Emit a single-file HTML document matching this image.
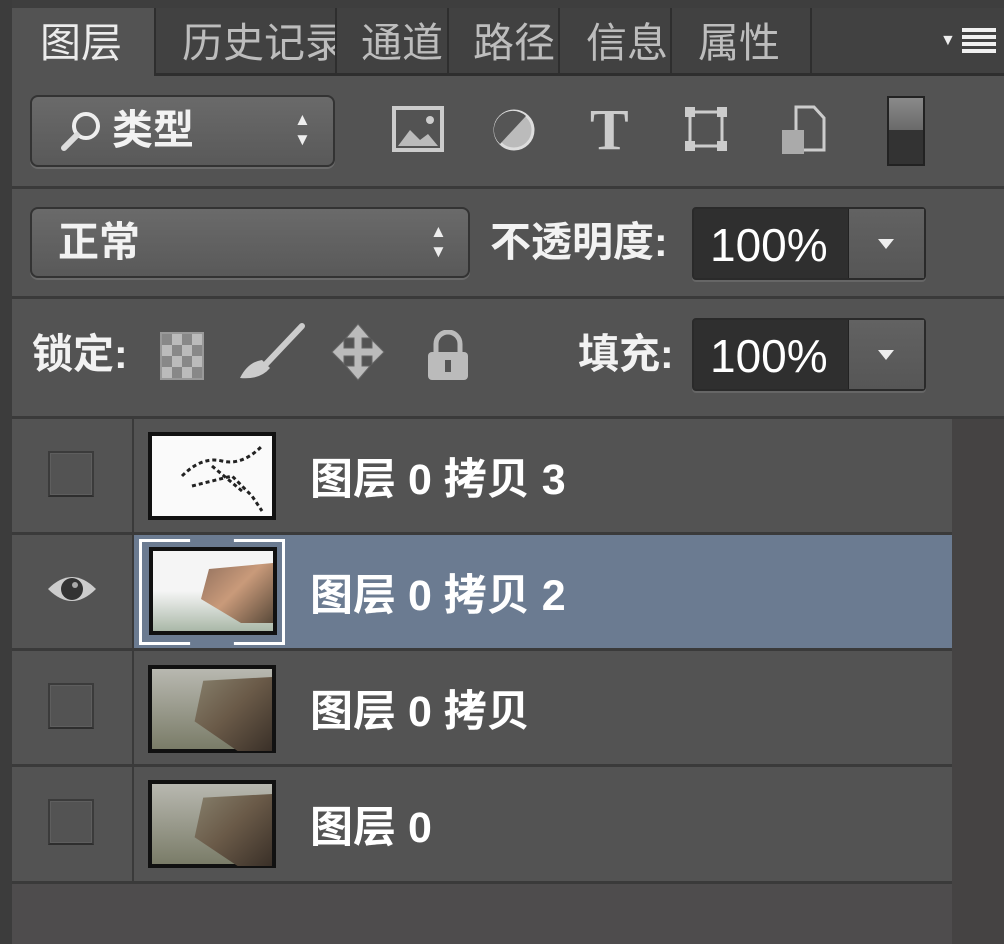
<!DOCTYPE html>
<html><head><meta charset="utf-8"><style>
*{margin:0;padding:0;box-sizing:border-box}
body{width:1004px;height:944px;background:#3c3c3c;position:relative;overflow:hidden;font-family:"Liberation Sans","Noto Sans CJK SC",sans-serif;color:#eee}
.a{position:absolute}
.tab{position:absolute;top:8px;height:67px;background:#414141;border-left:2px solid #2e2e2e;color:#bdbdbd;font-size:41px;line-height:70px;padding-left:14px;overflow:hidden;white-space:nowrap}
.dd{position:absolute;background:linear-gradient(#6a6a6a,#595959);border:2px solid #333;border-radius:8px;box-shadow:0 2px 0 #6a6a6a}
.box{position:absolute;background:#2f2f2f;border:2px solid #2a2a2a;border-radius:4px;box-shadow:0 2px 0 #666}
.box .arr{position:absolute;right:0;top:0;bottom:0;width:76px;background:linear-gradient(#626262,#565656);border-left:1px solid #222}
.lbl{font-size:41px;line-height:48px;color:#f2f2f2;font-weight:bold}
.row{position:absolute;left:12px;width:940px;background:#535353;border-bottom:3px solid #3a3a3a}
.cb{position:absolute;left:36px;width:46px;height:46px;border:2px solid #3b3b3b;border-bottom-color:#2e2e2e;box-shadow:inset 0 0 0 1px #5e5e5e}
.th{position:absolute;left:136px;width:128px;height:88px;border:4px solid #111}
.nm{position:absolute;left:298px;font-size:43px;line-height:50px;font-weight:bold;color:#fff;white-space:nowrap}
.pct{position:absolute;left:16px;top:10px;font-size:46px;line-height:52px;color:#fff}
</style></head><body>
<div class="a" style="left:12px;top:0;width:992px;height:944px;background:#535353"></div>
<div class="a" style="left:12px;top:0;width:992px;height:75px;background:#3e3e3e"></div>
<div class="tab" style="left:12px;width:142px;background:#535353;color:#ececec;border-left:none;padding-left:28px">图层</div>
<div class="tab" style="left:154px;width:181px;padding-left:26px">历史记录</div>
<div class="tab" style="left:335px;width:112px;padding-left:24px">通道</div>
<div class="tab" style="left:447px;width:111px;padding-left:24px">路径</div>
<div class="tab" style="left:558px;width:112px;padding-left:26px">信息</div>
<div class="tab" style="left:670px;width:140px;padding-left:26px">属性</div>
<div class="a" style="left:810px;top:8px;width:194px;height:67px;background:#414141;border-left:2px solid #2e2e2e"></div>
<div class="a" style="left:154px;top:73px;width:850px;height:3px;background:#2e2e2e"></div>
<div class="a" style="left:940px;top:32px;font-size:16px;color:#eee">▼</div>
<div class="a" style="left:962px;top:28px;width:34px;height:26px;background:repeating-linear-gradient(#f0f0f0 0 4px,transparent 4px 7px)"></div>

<div class="dd" style="left:30px;top:95px;width:305px;height:72px"></div>
<svg class="a" style="left:58px;top:108px" width="46" height="46" viewBox="0 0 46 46"><circle cx="28" cy="18" r="12" fill="none" stroke="#eee" stroke-width="4"/><line x1="19" y1="27" x2="6" y2="40" stroke="#ddd" stroke-width="6" stroke-linecap="round"/></svg>
<div class="a lbl" style="left:112px;top:106px">类型</div>
<div class="a" style="left:294px;top:110px;font-size:17px;line-height:20px;color:#eee">▲<br>▼</div>
<svg class="a" style="left:392px;top:106px" width="52" height="46"><rect x="2" y="2" width="48" height="42" fill="none" stroke="#ccc" stroke-width="4"/><path d="M6 40 L18 24 L28 34 L36 28 L46 40Z" fill="#bbb"/><circle cx="38" cy="14" r="4" fill="#ccc"/></svg>
<svg class="a" style="left:492px;top:108px" width="44" height="44"><circle cx="22" cy="22" r="19" fill="#bbb" stroke="#ddd" stroke-width="3"/><path d="M34 8 L8 36 A19 19 0 0 1 34 8Z" fill="#555"/></svg>
<div class="a" style="left:590px;top:96px;font-family:'Liberation Serif',serif;font-size:58px;font-weight:bold;color:#ccc">T</div>
<svg class="a" style="left:684px;top:106px" width="44" height="46"><rect x="6" y="6" width="32" height="34" fill="none" stroke="#ccc" stroke-width="3"/><g fill="#ccc"><rect x="1" y="1" width="10" height="10"/><rect x="33" y="1" width="10" height="10"/><rect x="1" y="35" width="10" height="10"/><rect x="33" y="35" width="10" height="10"/></g></svg>
<svg class="a" style="left:780px;top:104px" width="46" height="52"><path d="M16 3 H34 L44 14 V46 H16Z" fill="none" stroke="#ccc" stroke-width="3"/><rect x="2" y="26" width="22" height="24" fill="#aaa"/></svg>
<div class="a" style="left:887px;top:96px;width:38px;height:70px;background:#333;border:2px solid #222"><div style="height:32px;background:linear-gradient(#8a8a8a,#6a6a6a)"></div></div>
<div class="a" style="left:12px;top:186px;width:992px;height:3px;background:#3a3a3a"></div>

<div class="dd" style="left:30px;top:207px;width:440px;height:71px"></div>
<div class="a lbl" style="left:58px;top:218px">正常</div>
<div class="a" style="left:430px;top:222px;font-size:17px;line-height:20px;color:#eee">▲<br>▼</div>
<div class="a lbl" style="left:490px;top:218px">不透明度:</div>
<div class="box" style="left:692px;top:207px;width:234px;height:73px"><div class="pct">100%</div><div class="arr"><div style="position:absolute;left:29px;top:30px;border:8px solid transparent;border-top:10px solid #eee"></div></div></div>
<div class="a" style="left:12px;top:296px;width:992px;height:3px;background:#3a3a3a"></div>

<div class="a lbl" style="left:32px;top:330px">锁定:</div>
<div class="a" style="left:160px;top:332px;width:44px;height:48px;border:2px solid #999;background:repeating-conic-gradient(#bbb 0 25%,#888 0 50%) 0 0/20px 22px"></div>
<svg class="a" style="left:236px;top:322px" width="70" height="60"><path d="M66 4 L30 42" stroke="#ccc" stroke-width="6" stroke-linecap="round"/><path d="M26 38 Q12 40 4 56 Q24 58 34 46Z" fill="#ccc"/></svg>
<svg class="a" style="left:330px;top:322px" width="56" height="60"><path d="M28 2 L40 16 H32 V26 H42 V18 L54 30 L42 42 V34 H32 V44 H40 L28 58 L16 44 H24 V34 H14 V42 L2 30 L14 18 V26 H24 V16 H16Z" fill="#bbb" stroke="#666" stroke-width="1"/></svg>
<svg class="a" style="left:426px;top:330px" width="44" height="52"><path d="M10 22 V14 A12 12 0 0 1 34 14 V22" fill="none" stroke="#bbb" stroke-width="5"/><rect x="2" y="22" width="40" height="28" rx="4" fill="#bbb"/><rect x="19" y="30" width="6" height="12" fill="#555"/></svg>
<div class="a lbl" style="left:578px;top:330px">填充:</div>
<div class="box" style="left:692px;top:318px;width:234px;height:73px"><div class="pct">100%</div><div class="arr"><div style="position:absolute;left:29px;top:30px;border:8px solid transparent;border-top:10px solid #eee"></div></div></div>
<div class="a" style="left:12px;top:416px;width:992px;height:3px;background:#3a3a3a"></div>

<div class="a" style="left:952px;top:419px;width:52px;height:525px;background:#454343"></div>

<div class="row" style="top:419px;height:116px"><div class="a" style="left:120px;top:0;width:2px;height:113px;background:#3a3a3a"></div><div class="cb" style="top:32px"></div><div class="th" style="top:13px;background:#fafafa"><svg width="120" height="80"><path d="M30 40 Q50 20 70 25 T110 10 M40 50 L80 40 L100 60 L110 75 M60 30 L90 55" stroke="#222" stroke-width="3" fill="none" stroke-dasharray="4 3"/></svg></div><div class="nm" style="top:36px">图层 0 拷贝 3</div></div>
<div class="row" style="top:535px;height:116px;background:#6b7b91"><div class="a" style="left:0;top:0;width:122px;height:113px;background:#535353"></div><div class="a" style="left:120px;top:0;width:2px;height:113px;background:#3a3a3a"></div>
<svg class="a" style="left:34px;top:36px" width="52" height="36"><path d="M2 18 Q26 -6 50 18 Q26 42 2 18Z" fill="#ccc"/><circle cx="26" cy="18" r="11" fill="#333"/><circle cx="29" cy="14" r="3" fill="#aaa"/></svg>
<div class="a" style="left:127px;top:4px;width:146px;height:106px;border:3px solid #fff;clip-path:polygon(0 0,35% 0,35% 6%,65% 6%,65% 0,100% 0,100% 100%,65% 100%,65% 94%,35% 94%,35% 100%,0 100%)"></div>
<div class="th" style="top:12px;left:137px;background:linear-gradient(#f5f5f5 50%,#aab8a8);"><div style="position:absolute;left:40px;top:12px;width:80px;height:60px;background:linear-gradient(135deg,#8a6b5a,#c99a7a,#5a4a3a);clip-path:polygon(20% 10%,100% 0,100% 100%,60% 100%,10% 60%)"></div></div>
<div class="nm" style="top:36px">图层 0 拷贝 2</div></div>
<div class="row" style="top:651px;height:116px"><div class="a" style="left:120px;top:0;width:2px;height:113px;background:#3a3a3a"></div><div class="cb" style="top:32px"></div><div class="th" style="top:14px;background:linear-gradient(#b8b8b0,#7a7c68)"><div style="position:absolute;left:34px;top:8px;width:86px;height:74px;background:linear-gradient(135deg,#8a8470,#6a5a48,#3a3028);clip-path:polygon(20% 5%,100% 0,100% 100%,60% 100%,10% 60%)"></div></div><div class="nm" style="top:36px">图层 0 拷贝</div></div>
<div class="row" style="top:767px;height:117px"><div class="a" style="left:120px;top:0;width:2px;height:114px;background:#3a3a3a"></div><div class="cb" style="top:32px"></div><div class="th" style="top:13px;background:linear-gradient(#b8b8b0,#7a7c68)"><div style="position:absolute;left:34px;top:10px;width:86px;height:72px;background:linear-gradient(135deg,#8a8470,#6a5a48,#3a3028);clip-path:polygon(20% 5%,100% 0,100% 100%,60% 100%,10% 60%)"></div></div><div class="nm" style="top:36px">图层 0</div></div>
<div class="a" style="left:12px;top:884px;width:940px;height:60px;background:#4e4c4d"></div>
</body></html>
